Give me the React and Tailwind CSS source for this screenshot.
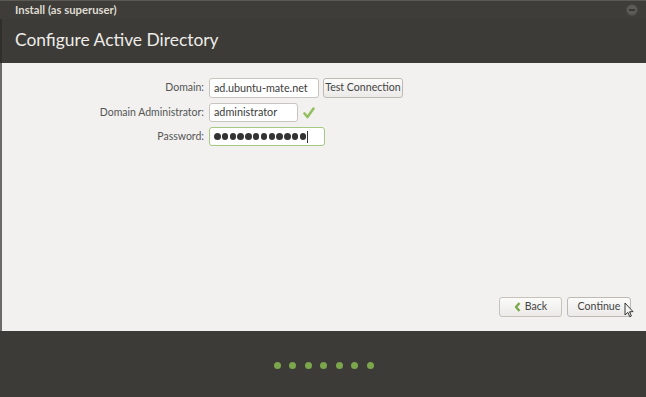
export default function App() {
  const dots = [1, 2, 3, 4, 5, 6, 7]
  const secret = [1, 2, 3, 4, 5, 6, 7, 8, 9, 10, 11, 12]

  return (
    <div className="w-[646px] h-[397px] flex flex-col bg-[#3c3b37] overflow-hidden whitespace-nowrap" style={{ fontFamily: 'Lato, "Open Sans", sans-serif' }}>
      {/* Title bar */}
      <div className="h-[19px] flex items-center justify-between pl-[15px] pr-[8px] border-t border-[#5a5954] bg-[#3e3d39]">
        <span className="text-[11.3px] font-bold text-[#dfdbd2] leading-none">Install (as superuser)</span>
        <div className="w-[12px] h-[12px] rounded-full bg-[#5c5b56] border border-[#4a4944] flex items-center justify-center">
          <div className="w-[6px] h-[1.5px] bg-[#3a3935]"></div>
        </div>
      </div>

      {/* Header */}
      <div className="h-[44px] flex items-center pl-[13px] border-l-2 border-[#2f2e2b]">
        <h1 className="text-[17.4px] text-[#eeece8] leading-none pb-[2px]">Configure Active Directory</h1>
      </div>

      {/* Content */}
      <div className="flex-1 flex flex-col justify-between bg-[#f2f1f0] border-l-2 border-[#6b6a66] pt-[15px] pb-[14px] pr-[15px] text-[10.5px] text-[#555]">
        <div className="flex flex-col gap-[5px]">
          <div className="flex items-center h-[20px]">
            <label className="w-[202px] text-right">Domain:</label>
            <div className="ml-[5px] w-[110px] h-[20px] flex items-center px-[4px] bg-white border border-[#c8c5bf] rounded-[3px] text-[10.8px] text-[#3c3c3c]">ad.ubuntu-mate.net</div>
            <button className="ml-[4px] w-[80px] h-[20px] flex items-center justify-center bg-gradient-to-b from-[#fbfbfa] to-[#ebeae8] border border-[#bdbab4] rounded-[3px] text-[10.6px] text-[#444]">Test Connection</button>
          </div>
          <div className="flex items-center h-[19px]">
            <label className="w-[202px] text-right">Domain Administrator:</label>
            <div className="ml-[5px] w-[89px] h-[19px] flex items-center px-[4px] bg-white border border-[#c8c5bf] rounded-[3px] text-[10.8px] text-[#3c3c3c]">administrator</div>
            <svg className="ml-[5px]" width="12" height="12" viewBox="0 0 12 12">
              <path d="M1.5 6.5 L4.5 10 L10.5 1.5" fill="none" stroke="#94c060" strokeWidth="2.6" strokeLinejoin="round" strokeLinecap="round" />
            </svg>
          </div>
          <div className="flex items-center h-[19px]">
            <label className="w-[202px] text-right">Password:</label>
            <div className="ml-[5px] w-[116px] h-[19px] flex items-center pl-[4px] bg-white border border-[#a3c982] rounded-[3px]">
              <div className="flex items-center gap-[1.3px]">
                {secret.map((s) => (
                  <div key={s} className="w-[6.5px] h-[6.5px] rounded-full bg-[#333]"></div>
                ))}
              </div>
              <span className="ml-[1px] w-[1px] h-[12px] bg-[#333]"></span>
            </div>
          </div>
        </div>

        <div className="flex justify-end gap-[5px] relative">
          <button className="w-[63px] h-[20px] flex items-center justify-center gap-[4px] bg-gradient-to-b from-[#fbfbfa] to-[#ebeae8] border border-[#c6c3bd] rounded-[3px] text-[10.6px] text-[#444]">
            <svg width="7" height="10" viewBox="0 0 7 10">
              <path d="M5.5 1 L2 5 L5.5 9" fill="none" stroke="#7aa84a" strokeWidth="2.4" strokeLinejoin="round" />
            </svg>
            Back
          </button>
          <button className="w-[64px] h-[20px] flex items-center justify-center bg-gradient-to-b from-[#fbfbfa] to-[#ebeae8] border border-[#bdbab4] rounded-[3px] text-[10.6px] text-[#444]">Continue</button>
          {/* Mouse pointer */}
          <svg className="absolute right-[-3px] top-[5px]" width="10" height="16" viewBox="0 0 10 16">
            <path d="M1 1 L1 13 L3.8 10.4 L5.8 14.8 L7.4 14 L5.5 9.8 L9 9.6 Z" fill="#f5f5f5" stroke="#222" strokeWidth="0.9" strokeLinejoin="round" />
          </svg>
        </div>
      </div>

      {/* Footer with progress dots */}
      <div className="h-[66px] flex items-center justify-center gap-[8.5px] pt-[3px] pl-[1px]">
        {dots.map((d) => (
          <div key={d} className="w-[7px] h-[7px] rounded-full bg-[#7ca64c]"></div>
        ))}
      </div>
    </div>
  )
}
